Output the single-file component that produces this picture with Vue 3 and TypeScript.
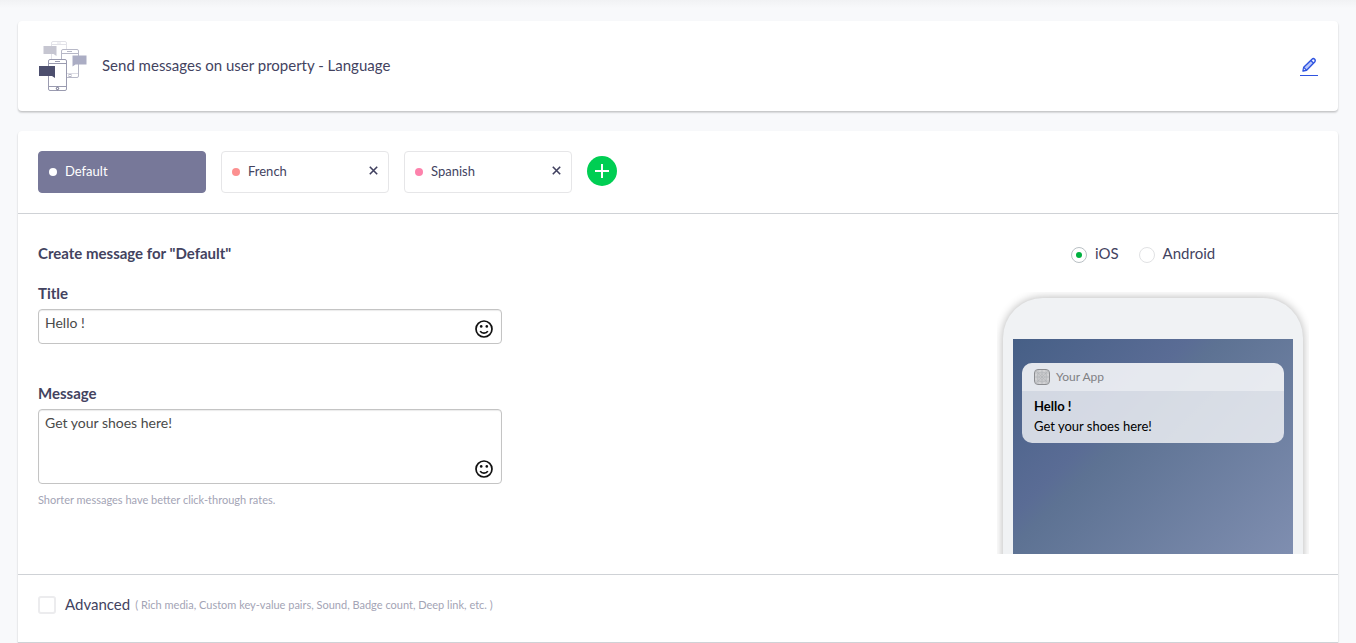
<script setup lang="ts">
import { computed, ref } from 'vue'

interface Tab {
  name: string
  color: string
  closable: boolean
}

const tabs = ref<Tab[]>([
  { name: 'Default', color: '#ffffff', closable: false },
  { name: 'French', color: '#fc9090', closable: true },
  { name: 'Spanish', color: '#fd82ac', closable: true },
])
const active = ref('Default')
const title = ref('Hello !')
const message = ref('Get your shoes here!')
const platform = ref('ios')
const advanced = ref(false)

const heading = computed(() => `Create message for "${active.value}"`)

function removeTab(name: string) {
  tabs.value = tabs.value.filter((t) => t.name !== name)
  if (active.value === name) active.value = 'Default'
}
</script>

<template>
  <main class="page">
    <header class="card summary">
      <svg class="devices" width="50" height="50" viewBox="0 0 50 50" fill="none" aria-hidden="true">
        <g stroke="#e2e2e8">
          <rect x="13.500" y="0.500" width="15" height="28" rx="1.500" fill="#fff" />
          <path d="M13.500 3.500h15" />
        </g>
        <path d="M19 2h4" stroke="#e2e2e8" />
        <path d="M5.500 5h13v10l-3-2h-10z" fill="#c6c6d1" />
        <g stroke="#b7b8c7">
          <rect x="23.500" y="8.500" width="17" height="28" rx="1.500" fill="#fff" />
          <path d="M23.500 12.500h17M29 10.500h5" />
        </g>
        <path d="M24 32.500h16" stroke="#dcdce4" />
        <rect x="31" y="33.500" width="2" height="2" stroke="#b7b8c7" />
        <path d="M34.500 14.500h14v9h-11l-3 2z" fill="#abadc4" />
        <g stroke="#9a9bb0">
          <rect x="10.500" y="18.500" width="18" height="31" rx="1.500" fill="#fff" />
          <path d="M10.500 22.500h18M10.500 45.500h18M17 20.500h5" />
          <circle cx="19.500" cy="47.500" r="1.200" stroke="#62637f" />
        </g>
        <path d="M1 25h16v12l-3-2H1z" fill="#4d4f6e" />
      </svg>
      <h1 class="summary-title">Send messages on user property - Language</h1>
      <button class="edit" type="button" aria-label="Edit">
        <svg width="16" height="16" viewBox="0 0 16 16" fill="none" stroke="#2f54e0" stroke-linejoin="round">
          <path d="M2 14l.7-3.700L11 2.200a1.900 1.900 0 0 1 2.700 2.700L5.600 13.200z" stroke-width="1.400" fill="#b9c6fa" />
          <path d="M9.800 3.500l2.700 2.700M2.700 10.300l2.900 2.900" stroke-width="1.200" />
          <path d="M11.600 3l1.400 1.400M3.200 12.700l.2-.9" stroke="#fff" stroke-width="1.200" />
        </svg>
      </button>
    </header>

    <section class="card composer">
      <nav class="tabs" aria-label="Languages">
        <div v-for="tab in tabs" :key="tab.name" class="tab" :class="{ active: tab.name === active }">
          <button class="tab-select" type="button" @click="active = tab.name">
            <span class="dot" :style="{ background: tab.color }"></span>{{ tab.name }}
          </button>
          <button v-if="tab.closable" class="tab-close" type="button" :aria-label="`Remove ${tab.name}`" @click="removeTab(tab.name)">
            <svg width="9" height="9" viewBox="0 0 9 9" stroke="#40405f" stroke-width="1.600">
              <path d="M.8.8l7.400 7.400M8.200.8L.8 8.200" />
            </svg>
          </button>
        </div>
        <button class="add" type="button" aria-label="Add language">
          <svg width="14" height="14" viewBox="0 0 14 14" stroke="#fff" stroke-width="2"><path d="M7 0v14M0 7h14" /></svg>
        </button>
      </nav>

      <div class="body">
        <form class="form" @submit.prevent>
          <h2 class="heading">{{ heading }}</h2>
          <label class="label" for="title">Title</label>
          <div class="field title-field">
            <input id="title" v-model="title" class="control" type="text" />
            <button class="emoji" type="button" aria-label="Insert emoji in title">
              <svg width="18" height="18" viewBox="0 0 18 18" fill="none" stroke="#111" stroke-width="1.700">
                <circle cx="9" cy="9" r="8" />
                <path d="M5.200 11.200c1.500 2.600 6.100 2.600 7.600 0" />
                <circle cx="6.200" cy="6.400" r="1.300" fill="#111" stroke="none" />
                <circle cx="11.800" cy="6.400" r="1.300" fill="#111" stroke="none" />
              </svg>
            </button>
          </div>
          <label class="label" for="message">Message</label>
          <div class="field">
            <textarea id="message" v-model="message" class="control area"></textarea>
            <button class="emoji" type="button" aria-label="Insert emoji in message">
              <svg width="18" height="18" viewBox="0 0 18 18" fill="none" stroke="#111" stroke-width="1.700">
                <circle cx="9" cy="9" r="8" />
                <path d="M5.200 11.200c1.500 2.600 6.100 2.600 7.600 0" />
                <circle cx="6.200" cy="6.400" r="1.300" fill="#111" stroke="none" />
                <circle cx="11.800" cy="6.400" r="1.300" fill="#111" stroke="none" />
              </svg>
            </button>
          </div>
          <p class="hint">Shorter messages have better click-through rates.</p>
        </form>

        <aside class="preview">
          <div class="platforms" role="radiogroup" aria-label="Platform">
            <label class="option"><input v-model="platform" type="radio" name="platform" value="ios" />iOS</label>
            <label class="option"><input v-model="platform" type="radio" name="platform" value="android" />Android</label>
          </div>
          <div class="phone-window">
            <div class="phone">
              <div class="screen">
                <article class="notification">
                  <div class="notification-app">
                    <svg width="16" height="16" viewBox="0 0 16 16" fill="none" stroke="#8b8c90">
                      <rect x=".5" y=".5" width="15" height="15" rx="3.500" fill="#d2d2d4" />
                      <g stroke="#b0b1b5" stroke-width=".6">
                        <path d="M1 4h14M1 8h14M1 12h14M4 1v14M8 1v14M12 1v14M1.500 1.500l13 13M14.500 1.500l-13 13" />
                        <circle cx="8" cy="8" r="5" />
                        <circle cx="8" cy="8" r="2.500" />
                      </g>
                    </svg>
                    Your App
                  </div>
                  <div class="notification-text">
                    <strong>{{ title }}</strong>
                    <p>{{ message }}</p>
                  </div>
                </article>
              </div>
            </div>
          </div>
        </aside>
      </div>

      <footer class="advanced">
        <input id="advanced" v-model="advanced" type="checkbox" />
        <label for="advanced">Advanced</label>
        <span class="advanced-hint">( Rich media, Custom key-value pairs, Sound, Badge count, Deep link, etc. )</span>
      </footer>
    </section>
  </main>
</template>

<style>
body {
  margin: 0;
  background: #f8f9fb;
}
</style>

<style scoped>
* {
  box-sizing: border-box;
}
.page {
  display: flex;
  flex-direction: column;
  gap: 20px;
  padding: 21px 18px 0;
  background: linear-gradient(#f1f2f4, #f8f9fb 8px);
  color: #43435f;
  font-family: Lato, "Open Sans", sans-serif;
  font-size: 15px;
  line-height: 20px;
}
h1,
h2,
p {
  margin: 0;
}
button {
  margin: 0;
  padding: 0;
  border: 0;
  background: none;
  color: inherit;
  font: inherit;
  cursor: pointer;
}
svg {
  display: block;
}
.card {
  background: #fff;
  border-radius: 4px;
  box-shadow: 0 1px 2px rgba(0, 0, 0, 0.14), 0 2px 2px rgba(0, 0, 0, 0.1);
}
.summary {
  display: flex;
  align-items: center;
  gap: 14px;
  padding: 20px;
}
.summary-title {
  flex: 1;
  padding-bottom: 2px;
  font-size: 15px;
  font-weight: 400;
}
.edit {
  display: flex;
  justify-content: center;
  width: 18px;
  padding-bottom: 2px;
  border-bottom: 1px solid #2f54e0;
}
.composer {
  border-bottom: 1px solid #cfd2d6;
  border-radius: 4px 4px 0 0;
}
.tabs {
  display: flex;
  align-items: center;
  gap: 15px;
  padding: 20px;
  border-bottom: 1px solid #cfd2d6;
}
.tab {
  display: flex;
  align-items: center;
  width: 168px;
  height: 42px;
  padding: 0 10px;
  border: 1px solid #e6e6e8;
  border-radius: 4px;
  font-size: 13px;
}
.tab.active {
  border-color: #777899;
  background: #777899;
  color: #fff;
}
.tab-select {
  display: flex;
  flex: 1;
  align-items: center;
  gap: 8px;
  padding-bottom: 2px;
}
.dot {
  width: 8px;
  height: 8px;
  margin-top: 2px;
  border-radius: 50%;
}
.tab-close {
  padding: 0 0 4px;
}
.add {
  display: grid;
  place-items: center;
  width: 30px;
  height: 30px;
  margin-bottom: 2px;
  border-radius: 50%;
  background: #00ce53;
}
.body {
  display: flex;
  justify-content: space-between;
  padding: 29px 29px 20px 20px;
  border-bottom: 1px solid #cfd2d6;
}
.form {
  width: 464px;
}
.heading {
  margin-bottom: 20px;
  font-size: 15px;
  font-weight: 700;
}
.label {
  display: block;
  margin-bottom: 6px;
  font-weight: 700;
}
.field {
  position: relative;
}
.title-field {
  margin-bottom: 39px;
}
.control {
  display: block;
  width: 100%;
  height: 35px;
  padding: 3px 36px 11px 6px;
  border: 1px solid #c4c4c4;
  border-radius: 4px;
  outline: 0;
  box-shadow: inset 0 1px 1px rgba(0, 0, 0, 0.08);
  background: #fff;
  color: #4a4a4a;
  font: inherit;
  font-size: 14px;
}
.area {
  height: 75px;
  resize: none;
}
.emoji {
  position: absolute;
  right: 9px;
  bottom: 6px;
}
.hint {
  margin-top: 6px;
  color: #a3a4b5;
  font-size: 11px;
}
.preview {
  width: 312px;
}
.platforms {
  display: flex;
  gap: 20px;
  padding-left: 74px;
}
.option {
  display: flex;
  align-items: center;
  gap: 8px;
}
.option input {
  appearance: none;
  display: grid;
  place-items: center;
  width: 16px;
  height: 16px;
  margin: 4px 0 0;
  border: 1px solid #e1e2e4;
  border-radius: 50%;
}
.option input:checked {
  border-color: #b9c0c4;
}
.option input:checked::before {
  content: "";
  width: 6px;
  height: 6px;
  border-radius: 50%;
  background: #00b140;
}
.phone-window {
  height: 262px;
  margin-top: 29px;
  padding: 6px 6px 0;
  overflow: hidden;
}
.phone {
  padding: 41px 10px 0;
  border-radius: 40px 40px 0 0;
  background: #f0f2f4;
  box-shadow: 0 0 10px rgba(0, 0, 0, 0.3);
}
.screen {
  height: 240px;
  padding: 24px 9px;
  background: linear-gradient(135deg, #465f86 0%, #5a6c95 34%, #5d7293 40%, #7f8eb0 95%);
}
.notification {
  border-radius: 10px;
  background: rgba(255, 255, 255, 0.75);
  color: #000;
  font-size: 13px;
  overflow: hidden;
}
.notification-app {
  display: flex;
  align-items: center;
  gap: 6px;
  height: 28px;
  padding: 0 12px;
  background: rgba(255, 255, 255, 0.4);
  color: #808084;
  font-size: 12px;
}
.notification-text {
  padding: 5px 12px 7px;
}
.notification-text strong {
  display: block;
}
.advanced {
  display: flex;
  align-items: center;
  padding: 19px 20px 26px;
}
.advanced input {
  appearance: none;
  width: 18px;
  height: 18px;
  margin: 0 9px 0 0;
  border: 2px solid #ececee;
  border-radius: 3px;
}
.advanced input:checked {
  background: #00ce53;
}
.advanced label {
  margin-right: 5px;
  padding-bottom: 2px;
}
.advanced-hint {
  color: #a3a4b5;
  font-size: 11px;
}
</style>
